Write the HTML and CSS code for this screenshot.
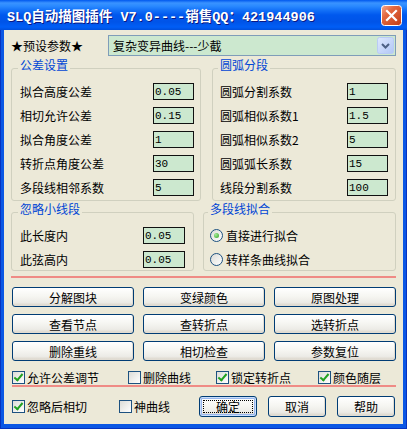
FILE: index.html
```html
<!DOCTYPE html>
<html lang="zh-CN">
<head>
    <meta charset="UTF-8">
    <title>SLQ自动描图插件</title>
    <link rel="stylesheet" href="styles.css">
</head>
<body>
<div class="window">
    <div class="titlebar">
        <span class="title">SLQ自动描图插件 V7.0----销售QQ：421944906</span>
        <span class="close">
            <svg width="21" height="21" viewBox="0 0 21 21">
                <defs>
                    <linearGradient id="closeGrad" x1="0" y1="0" x2="1" y2="1">
                        <stop offset="0" stop-color="#F6AA90"/>
                        <stop offset="0.35" stop-color="#E3683F"/>
                        <stop offset="1" stop-color="#C23C16"/>
                    </linearGradient>
                </defs>
                <rect x="0.5" y="0.5" width="20" height="20" rx="3" fill="url(#closeGrad)" stroke="#FFFFFF"/>
                <path d="M6 6 L15 15 M15 6 L6 15" stroke="#FFFFFF" stroke-width="2.2" stroke-linecap="square"/>
            </svg>
        </span>
    </div>

    <div class="client">
        <div class="preset">
            <span class="preset-label">★预设参数★</span>
            <div class="combo">
                <span>复杂变异曲线---少截</span>
                <span class="drop">
                    <svg width="17" height="17" viewBox="0 0 17 17">
                        <defs>
                            <linearGradient id="dropGrad" x1="0" y1="0" x2="1" y2="1">
                                <stop offset="0" stop-color="#DEE8FE"/>
                                <stop offset="1" stop-color="#B2C7F6"/>
                            </linearGradient>
                        </defs>
                        <rect x="0.5" y="0.5" width="16" height="16" rx="2" fill="url(#dropGrad)" stroke="#B9CBF5"/>
                        <path d="M5 7 L8.5 10.5 L12 7" fill="none" stroke="#4D6185" stroke-width="2"/>
                    </svg>
                </span>
            </div>
        </div>

        <div class="groups groups-top">
            <fieldset class="group g-tol">
                <legend>公差设置</legend>
                <div class="row"><span>拟合高度公差</span><input class="field" value="0.05"></div>
                <div class="row"><span>相切允许公差</span><input class="field" value="0.15"></div>
                <div class="row"><span>拟合角度公差</span><input class="field" value="1"></div>
                <div class="row"><span>转折点角度公差</span><input class="field" value="30"></div>
                <div class="row"><span>多段线相邻系数</span><input class="field" value="5"></div>
            </fieldset>
            <fieldset class="group g-arc">
                <legend>圆弧分段</legend>
                <div class="row"><span>圆弧分割系数</span><input class="field" value="1"></div>
                <div class="row"><span>圆弧相似系数1</span><input class="field" value="1.5"></div>
                <div class="row"><span>圆弧相似系数2</span><input class="field" value="5"></div>
                <div class="row"><span>圆弧弧长系数</span><input class="field" value="15"></div>
                <div class="row"><span>线段分割系数</span><input class="field" value="100"></div>
            </fieldset>
        </div>

        <div class="groups groups-mid">
            <fieldset class="group g-skip">
                <legend>忽略小线段</legend>
                <div class="row"><span>此长度内</span><input class="field" value="0.05"></div>
                <div class="row"><span>此弦高内</span><input class="field" value="0.05"></div>
            </fieldset>
            <fieldset class="group g-fit">
                <legend>多段线拟合</legend>
                <div class="row radio-row"><span class="radio on"></span><span>直接进行拟合</span></div>
                <div class="row radio-row"><span class="radio"></span><span>转样条曲线拟合</span></div>
            </fieldset>
        </div>

        <div class="sep"></div>

        <div class="buttons">
            <button class="btn">分解图块</button>
            <button class="btn">变绿颜色</button>
            <button class="btn">原图处理</button>
            <button class="btn">查看节点</button>
            <button class="btn">查转折点</button>
            <button class="btn">选转折点</button>
            <button class="btn">删除重线</button>
            <button class="btn">相切检查</button>
            <button class="btn">参数复位</button>
        </div>

        <div class="checks">
            <label class="opt"><span class="box on"></span>允许公差调节</label>
            <label class="opt"><span class="box"></span>删除曲线</label>
            <label class="opt"><span class="box on"></span>锁定转折点</label>
            <label class="opt"><span class="box on"></span>颜色随层</label>
        </div>

        <div class="sep sep-low"></div>

        <div class="footer">
            <label class="opt opt-a"><span class="box on"></span>忽略后相切</label>
            <label class="opt opt-b"><span class="box"></span>神曲线</label>
            <button class="btn btn-sm default">确定</button>
            <button class="btn btn-sm">取消</button>
            <button class="btn btn-sm">帮助</button>
        </div>
    </div>
</div>
</body>
</html>
```

FILE: styles.css
```css
body {
    margin: 0;
    font-family: "Noto Sans CJK SC", sans-serif;
    font-size: 12px;
    color: #000;
    background: #ECE9D8;
}
.window {
    width: 407px;
    height: 429px;
    display: flex;
    flex-direction: column;
    background: #0B57E4;
    box-shadow: inset 0 0 0 1px #0733C0;
}
.titlebar {
    height: 30px;
    flex: none;
    display: flex;
    align-items: center;
    justify-content: space-between;
    padding: 0 5px 0 7px;
    box-sizing: border-box;
    background: linear-gradient(to bottom, #0058EE 0, #3A93FF 3px, #2A8AFF 6px, #1472F8 10px, #0058EE 15px, #0054E8 22px, #005EF6 27px, #004FDC 30px);
}
.title {
    color: #fff;
    font-family: "Liberation Mono", "Noto Sans CJK SC", monospace;
    font-weight: bold;
    font-size: 13.5px;
    white-space: pre;
    text-shadow: 1px 1px #0A1883;
}
.close { display: flex; }
.client {
    flex: 1;
    margin: 0 4px 5px;
    background: #ECE9D8;
    display: flex;
    flex-direction: column;
}

/* preset row */
.preset {
    display: flex;
    align-items: center;
    height: 21px;
    margin: 5px 0 0 7px;
}
.preset-label { width: 97px; }
.combo {
    width: 288px;
    height: 21px;
    box-sizing: border-box;
    border: 1px solid #7F9DB9;
    background: #CCE8CF;
    display: flex;
    align-items: center;
    padding: 0 1px 0 4px;
}
.drop { margin-left: auto; display: flex; }

/* group boxes */
.groups { display: flex; margin-left: 7px; }
.groups-top { margin-top: 2px; gap: 11px; }
.groups-mid { margin-top: 1px; gap: 9px; }
.group {
    margin: 0;
    min-width: 0;
    box-sizing: border-box;
    border: 1px solid #D0D0BF;
    border-radius: 3px;
    padding: 5px 6px 4px 8px;
}
.group legend {
    color: #0046D5;
    line-height: 14px;
    padding: 0 2px 6px;
    margin-left: -2px;
}
.g-tol { width: 190px; }
.g-arc { width: 184px; padding-left: 7px; padding-right: 7px; }
.g-skip { width: 183px; padding: 5px 8px 2px 8px; }
.g-fit { width: 193px; padding: 5px 6px 2px 6px; }

.row {
    display: flex;
    align-items: center;
    justify-content: space-between;
    height: 17px;
    white-space: nowrap;
}
.row + .row { margin-top: 7px; }
.field {
    width: 41px;
    height: 17px;
    box-sizing: border-box;
    margin: 0;
    padding: 0 0 0 1px;
    border: 1px solid #111;
    background: #CCE8CF;
    font-family: "Liberation Mono", monospace;
    font-size: 11px;
    color: #000;
    outline: none;
}
.g-skip .field { width: 42px; }
.radio-row { justify-content: flex-start; gap: 3px; }
.radio {
    width: 13px;
    height: 13px;
    box-sizing: border-box;
    border: 1px solid #1C5180;
    border-radius: 50%;
    background: linear-gradient(135deg, #DCDCD7, #FFFFFF);
    position: relative;
    flex: none;
}
.radio.on::after {
    content: "";
    position: absolute;
    left: 3px;
    top: 3px;
    width: 5px;
    height: 5px;
    border-radius: 50%;
    background: radial-gradient(circle at 35% 35%, #A6EB9A, #2FA31F);
}

/* separators */
.sep {
    height: 2px;
    flex: none;
    background: #EF8B85;
    margin: 5px 7px 0 7px;
}
.sep-low { margin: 3px 7px 0 8px; }

/* buttons */
.buttons {
    display: grid;
    grid-template-columns: repeat(3, 122px);
    grid-auto-rows: 20px;
    column-gap: 9px;
    row-gap: 7px;
    margin: 9px 0 0 8px;
}
.btn {
    font: inherit;
    color: #000;
    margin: 0;
    padding: 0;
    height: 20px;
    border: 1px solid #003C74;
    border-radius: 3px;
    background: linear-gradient(to bottom, #FFFFFF 0%, #F6F6F2 45%, #ECEBE6 80%, #D8D2C6 100%);
    box-shadow: inset -1px -1px 0 #E1DCD2;
}
.btn-sm { width: 58px; height: 21px; flex: none; }
.btn-sm + .btn-sm { margin-left: 11px; }
.default {
    position: relative;
    box-shadow: inset 0 0 0 1px #C9DEFB, inset 0 0 0 2px #98B6EE;
}
.default::after {
    content: "";
    position: absolute;
    left: 3px;
    top: 3px;
    right: 3px;
    bottom: 3px;
    border: 1px dotted #000;
}

/* checkboxes */
.checks {
    display: grid;
    grid-template-columns: 116px 88px 102px auto;
    align-items: center;
    height: 13px;
    margin: 8px 0 0 8px;
}
.opt {
    display: flex;
    align-items: center;
    gap: 2px;
    white-space: nowrap;
}
.box {
    width: 13px;
    height: 13px;
    box-sizing: border-box;
    border: 1px solid #1C5180;
    background: linear-gradient(135deg, #DCDCD7, #FFFFFF);
    position: relative;
    flex: none;
}
.box.on::after {
    content: "";
    position: absolute;
    left: 3px;
    top: 0;
    width: 3px;
    height: 7px;
    border: solid #21A121;
    border-width: 0 2px 2px 0;
    transform: rotate(40deg);
}
.footer {
    display: flex;
    align-items: center;
    height: 21px;
    margin: 9px 0 0 8px;
}
.opt-a { width: 107px; }
.opt-b { width: 80px; }
```
